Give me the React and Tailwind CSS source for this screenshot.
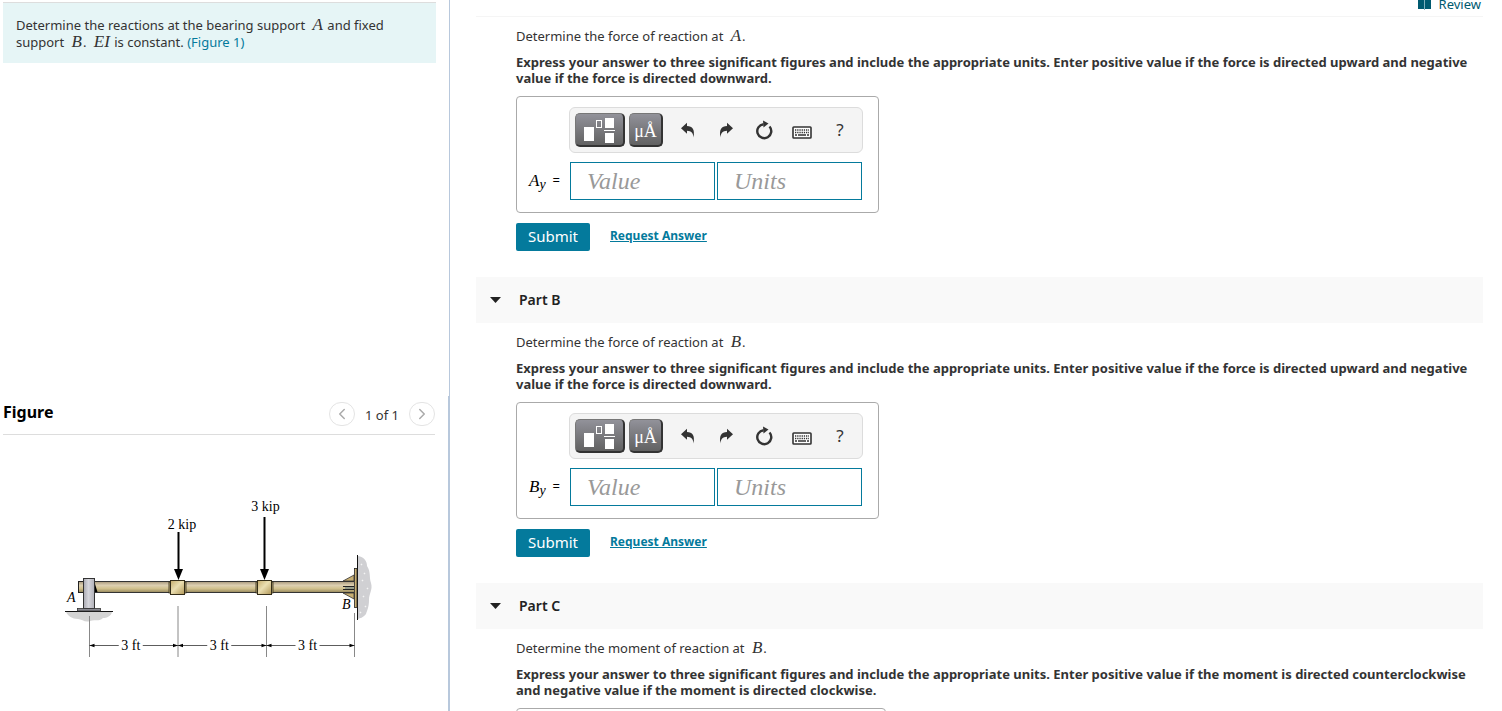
import React, { useState } from 'react';
import { ChevronLeft, ChevronRight } from 'lucide-react';

const forceNote =
  'Express your answer to three significant figures and include the appropriate units. Enter positive value if the force is directed upward and negative value if the force is directed downward.';
const momentNote =
  'Express your answer to three significant figures and include the appropriate units. Enter positive value if the moment is directed counterclockwise and negative value if the moment is directed clockwise.';

const parts = [
  { id: 'a', quantity: 'force', point: 'A', note: forceNote, symbol: 'A', sub: 'y' },
  { id: 'b', title: 'Part B', quantity: 'force', point: 'B', note: forceNote, symbol: 'B', sub: 'y' },
  { id: 'c', title: 'Part C', quantity: 'moment', point: 'B', note: momentNote, symbol: 'M', sub: 'B', wide: true },
];

function MathVar({ children }) {
  return <i className="mr-px ml-1 font-['Liberation_Serif',serif] text-[17px] leading-0">{children}</i>;
}

function TemplateIcon() {
  return (
    <svg width="32" height="26" viewBox="0 0 32 26" aria-hidden="true">
      <rect x="0" y="10" width="10" height="14" fill="#fff" />
      <rect x="12.500" y="3.500" width="5" height="7" fill="none" stroke="#fff" />
      <rect x="21" y="1" width="9" height="10" fill="#fff" />
      <rect x="20" y="13" width="11" height="1" fill="#fff" />
      <rect x="21" y="16" width="9" height="10" fill="#fff" />
    </svg>
  );
}

function UndoIcon({ flip }) {
  return (
    <svg width="14" height="16" viewBox="0 0 14 16" className={flip ? '-scale-x-100' : ''} aria-hidden="true">
      <path d="M0 6.2L6 0.8V4C11.500 4.200 14 7.200 12.600 15.500C12.300 11.200 10.300 8.800 6 8.700V11.700Z" fill="#333" />
    </svg>
  );
}

function ResetIcon() {
  return (
    <svg width="18" height="20" viewBox="0 0 18 20" aria-hidden="true">
      <path d="M14.500 6.500A7 7 0 1 1 8.500 4.200" fill="none" stroke="#333" strokeWidth="2.400" />
      <path d="M8 0.500L13.500 3.500L8.500 7.500Z" fill="#333" />
    </svg>
  );
}

function KeyboardIcon() {
  return (
    <svg width="20" height="13" viewBox="0 0 20 13" aria-hidden="true">
      <rect x="1" y="1" width="18" height="11" rx="0.800" fill="#fff" stroke="#333" strokeWidth="1.600" />
      <path d="M3 4H17M3 6.500H17" stroke="#333" strokeWidth="1.300" strokeDasharray="1.300 0.900" />
      <path d="M3 9H5M6 9H14M15 9H17" stroke="#333" strokeWidth="1.300" />
    </svg>
  );
}

function BookIcon() {
  return (
    <svg width="13" height="12" viewBox="0 0 13 12" aria-hidden="true">
      <path d="M0 0H6V11H0ZM7 0H13V11H7Z" fill="#005a70" />
      <path d="M6 0H7V12H6Z" fill="#7fb0bd" />
    </svg>
  );
}

function Toolbar() {
  const dark =
    'flex h-[34px] shrink-0 items-center justify-center rounded-[5px] border border-r-2 border-b-2 border-t-[#777] border-r-[#333] border-b-[#333] border-l-[#777] bg-linear-to-b from-[#92929a] to-[#626262] text-white';
  const plain = 'flex h-[34px] w-[38px] items-center justify-center';
  return (
    <div className="-mx-px flex w-[294px] items-center gap-1 self-end rounded-md border border-[#dcdcdc] bg-[#f4f4f4] py-[5px] pr-[3px] pl-[5px]">
      <button aria-label="Templates" className={`${dark} w-[50px]`}>
        <TemplateIcon />
      </button>
      <button aria-label="Symbols" className={`${dark} w-[34px] pt-1 font-['Liberation_Serif',serif] text-[18px]`}>
        μÅ
      </button>
      <div className="ml-[2px] flex">
        <button aria-label="Undo" className={plain}><UndoIcon /></button>
        <button aria-label="Redo" className={plain}><UndoIcon flip /></button>
        <button aria-label="Reset" className={plain}><ResetIcon /></button>
        <button aria-label="Keyboard shortcuts" className={`${plain} pt-1`}><KeyboardIcon /></button>
        <button aria-label="Help" className={`${plain} text-[17px] text-[#333]`}>?</button>
      </div>
    </div>
  );
}

function AnswerBox({ id, symbol, sub, wide }) {
  const [value, setValue] = useState('');
  const [units, setUnits] = useState('');
  const field =
    "h-[38px] w-[145px] border border-[#047a9c] bg-white px-4 font-['Liberation_Serif',serif] text-2xl text-black italic placeholder:text-[#999] focus:outline-none";

  return (
    <div className="mt-[10px] flex w-fit flex-col gap-[9px] rounded border border-[#aaa] pt-[10px] pr-4 pb-3 pl-3">
      <Toolbar />
      <div className="flex items-center">
        <label
          htmlFor={`${id}-value`}
          className={`${wide ? 'w-12' : 'w-[41px]'} flex items-center justify-between pr-[10px] whitespace-nowrap text-black`}
        >
          <span>
            <i className="font-['Liberation_Serif',serif] text-[17px]">{symbol}</i>
            <sub className="-bottom-[3px] font-['Liberation_Serif',serif] text-[14px] italic">{sub}</sub>
          </span>
          <span>=</span>
        </label>
        <div className="flex gap-[2px]">
          <input id={`${id}-value`} className={field} placeholder="Value" value={value} onChange={e => setValue(e.target.value)} />
          <input aria-label="Units" className={field} placeholder="Units" value={units} onChange={e => setUnits(e.target.value)} />
        </div>
      </div>
    </div>
  );
}

function Part({ part }) {
  const [open, setOpen] = useState(true);
  return (
    <section>
      {part.title && (
        <h2 className="bg-[#f9f9f9]">
          <button
            onClick={() => setOpen(!open)}
            className="flex h-[46px] w-full items-center gap-[18px] pl-[14px] text-sm font-semibold text-[#222]"
          >
            <svg width="11" height="6" viewBox="0 0 11 6" aria-hidden="true">
              <path d="M0 0H11L5.500 6Z" fill="#222" />
            </svg>
            {part.title}
          </button>
        </h2>
      )}
      {open && (
        <div className="pt-[10px] pb-[26px] pl-10">
          <p className="leading-[18px]">
            Determine the {part.quantity} of reaction at <MathVar>{part.point}</MathVar>.
          </p>
          <p className="mt-[9px] leading-4 font-bold">{part.note}</p>
          <AnswerBox id={part.id} symbol={part.symbol} sub={part.sub} wide={part.wide} />
          <div className="mt-[10px] flex items-center gap-5">
            <button className="h-7 w-[74px] rounded-xs bg-[#047a9c] pb-[2px] text-[15px] text-white">Submit</button>
            <a href="#answer" className="pb-[2px] text-xs font-bold text-[#047a9c] underline">
              Request Answer
            </a>
          </div>
        </div>
      )}
    </section>
  );
}

function Collar({ x }) {
  return (
    <g stroke="#332c18">
      <rect x={x - 8.5} y="582" width="17" height="11" fill="#b8a878" strokeWidth="0.800" />
      <rect x={x - 7} y="580.500" width="14" height="14" fill="url(#collar)" />
    </g>
  );
}

function Force({ x, top, labelX, labelY, label }) {
  return (
    <g>
      <text x={labelX} y={labelY} textAnchor="middle">{label}</text>
      <path d={`M${x} ${top}V570`} stroke="#000" strokeWidth="2" />
      <path d={`M${x - 4.5} 569H${x + 4.5}L${x} 580Z`} />
    </g>
  );
}

function Dimension({ from, to }) {
  const mid = (from + to) / 2 - 3;
  return (
    <g>
      <path d={`M${from} 645.500H${mid - 12}M${mid + 12} 645.500H${to}`} stroke="#333" strokeWidth="0.800" />
      <path d={`M${from} 645.500l5 -1.800v3.600ZM${to} 645.500l-5 -1.800v3.600Z`} />
      <text x={mid} y="650" textAnchor="middle">3 ft</text>
    </g>
  );
}

function BeamFigure() {
  return (
    <svg
      width="320"
      height="170"
      viewBox="60 495 320 170"
      role="img"
      aria-label="Beam with two loads"
      className="font-['Liberation_Serif',serif] text-[14px]"
    >
      <defs>
        <linearGradient id="beam" x1="0" y1="0" x2="0" y2="1">
          <stop offset="0" stopColor="#a8987c" />
          <stop offset="0.350" stopColor="#ddd0b2" />
          <stop offset="0.650" stopColor="#d0c08c" />
          <stop offset="1" stopColor="#94865c" />
        </linearGradient>
        <linearGradient id="collar" x1="0" y1="0" x2="1" y2="1">
          <stop offset="0" stopColor="#c4ac6c" />
          <stop offset="0.450" stopColor="#ebdfb2" />
          <stop offset="1" stopColor="#b09656" />
        </linearGradient>
        <linearGradient id="post" x1="0" y1="0" x2="1" y2="0">
          <stop offset="0" stopColor="#a8a8b0" />
          <stop offset="0.450" stopColor="#d6d6dc" />
          <stop offset="1" stopColor="#b0b0b8" />
        </linearGradient>
      </defs>

      {/* ground and wall */}
      <path d="M66 612H112C111 616 107 618 103 618C99 622 94 619 90 621C85 623 82 619 78 619C72 619 68 616 66 612Z" fill="#d4d4d4" />
      <path d="M65 611.500H113" stroke="#111" />
      <path d="M358 556C364 557 367 561 367 566C371 572 369 577 371 583C373 590 369 593 369 600C369 607 367 611 366 614C363 618 360 618 358 619Z" fill="#d0d0d3" />
      <path d="M361 564l1 1M364 573l1 1M362 580l1 1M367 588l1 1M363 596l1 1M365 606l1 1M360 612l1 1" stroke="#f4f4f4" strokeWidth="1.500" />
      <path d="M357.500 555V620" stroke="#111" />

      {/* beam */}
      <rect x="78.500" y="581.500" width="6" height="11" fill="url(#beam)" stroke="#222" />
      <rect x="95" y="581.500" width="259" height="11" fill="url(#beam)" />
      <path d="M95 581.500H354M95 592.500H354" stroke="#333" />
      <path d="M343 581L354 575V581ZM343 593L354 599V593Z" fill="#c7ae72" stroke="#333" strokeWidth="0.800" />
      <path d="M343 586.500H354M343 589.500H354" stroke="#222" />
      <path d="M345 588H354" stroke="#587684" />
      <rect x="354.500" y="568.500" width="2.500" height="39" fill="#c7ae72" stroke="#222" strokeWidth="0.800" />

      {/* bearing */}
      <path d="M95 584L97.500 592H95Z" />
      <rect x="83.500" y="578.500" width="11" height="30" fill="url(#post)" stroke="#333" />
      <rect x="77.500" y="608.500" width="23" height="2.500" fill="#898991" stroke="#333" strokeWidth="0.800" />

      <Collar x={177.5} />
      <Collar x={264.5} />
      <Force x={178.5} top={532} labelX={182} labelY={529} label="2 kip" />
      <Force x={264.5} top={517} labelX={265.5} labelY={511} label="3 kip" />
      <path d="M89.500 616V657M178 606V657M266.500 606V657M354.500 613V657" stroke="#888" />
      <Dimension from={89.5} to={178} />
      <Dimension from={178} to={266.5} />
      <Dimension from={266.5} to={354.5} />
      <text x="67" y="602" fontStyle="italic">A</text>
      <text x="342" y="609" fontStyle="italic">B</text>
    </svg>
  );
}

export default function App() {
  const round = 'flex h-6 w-[26px] items-center justify-center rounded-full border border-[#e4e4e4] text-[#aaa]';
  return (
    <div className="flex h-screen overflow-hidden bg-white font-['Noto_Sans','Open_Sans',sans-serif] text-[13px] text-[#333]">
      <aside className="flex w-[450px] shrink-0 flex-col">
        <div className="h-[396px] border-r border-[#b8c8dc] pt-[2px] pr-[13px] pl-[3px]">
          <p className="border-t border-[#ddd] bg-[#e6f5f6] px-[13px] pt-[14px] pb-3 leading-[17px]">
            Determine the reactions at the bearing support <MathVar>A</MathVar> and fixed support{' '}
            <MathVar>B</MathVar>. <MathVar>EI</MathVar> is constant.{' '}
            <a href="#figure" className="text-[#047a9c]">(Figure 1)</a>
          </p>
        </div>
        <div id="figure" className="flex-1 border-r-2 border-[#b8c8dc] pr-[13px] pl-[3px]">
          <div className="flex h-[39px] items-center justify-between border-b border-[#ddd]">
            <h2 className="pb-[6px] text-base font-bold text-black">Figure</h2>
            <div className="flex items-center gap-[10px] pb-[2px]">
              <button aria-label="Previous figure" className={round}><ChevronLeft size={18} /></button>
              <span className="pt-1">1 of 1</span>
              <button aria-label="Next figure" className={round}><ChevronRight size={18} /></button>
            </div>
          </div>
          <div className="pt-[60px] pl-[57px]">
            <BeamFigure />
          </div>
        </div>
      </aside>

      <main className="min-w-0 flex-1 overflow-hidden pr-[19px] pl-[26px]">
        <header className="flex h-[17px] items-center justify-end border-b border-[#f5f5f5] pb-2">
          <a href="#review" className="flex items-center gap-2 pr-[2px] leading-4 text-[#005a70]">
            <BookIcon />
            Review
          </a>
        </header>
        {parts.map(part => (
          <Part key={part.id} part={part} />
        ))}
      </main>
    </div>
  );
}
